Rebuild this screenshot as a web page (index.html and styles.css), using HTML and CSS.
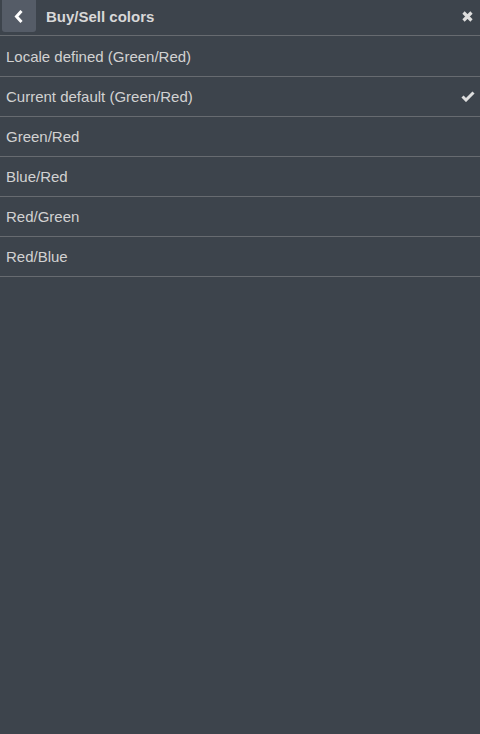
FILE: index.html
```html
<!DOCTYPE html>
<html lang="en">
<head>
    <meta charset="UTF-8">
    <meta name="viewport" content="width=device-width, initial-scale=1.0">
    <title>Buy/Sell colors</title>
    <link rel="stylesheet" href="styles.css">
</head>
<body>
    <div class="panel">
        <div class="header">
            <button class="back">
                <svg width="10" height="13" viewBox="0 0 10 13"><path d="M7.5 1 L2.5 6.5 L7.5 12" fill="none" stroke="#fff" stroke-width="3"/></svg>
            </button>
            <span class="title">Buy/Sell colors</span>
            <span class="close">
                <svg width="11" height="11" viewBox="0 0 11 11"><path d="M1.5 1.5 L9.5 9.5 M9.5 1.5 L1.5 9.5" stroke="#ddd" stroke-width="3.2"/></svg>
            </span>
        </div>
        <ul class="options">
            <li>Locale defined (Green/Red)</li>
            <li class="selected">Current default (Green/Red)
                <svg class="check" width="14" height="11" viewBox="0 0 14 11"><path d="M1.5 5.5 L5 9 L12.5 1.5" fill="none" stroke="#ddd" stroke-width="3"/></svg>
            </li>
            <li>Green/Red</li>
            <li>Blue/Red</li>
            <li>Red/Green</li>
            <li>Red/Blue</li>
        </ul>
    </div>
</body>
</html>
```

FILE: styles.css
```css
body {
    margin: 0;
    background-color: #3d444c;
    font-family: Arial, "Liberation Sans", sans-serif;
    color: #d2d2d2;
    height: 100vh;
}
.header {
    display: flex;
    align-items: flex-start;
    height: 35px;
    border-bottom: 1px solid #676b70;
}
.back {
    width: 34px;
    height: 32px;
    margin-left: 2px;
    padding: 0;
    border: none;
    border-radius: 0 0 3px 3px;
    background-color: #555c67;
    display: flex;
    align-items: center;
    justify-content: center;
    cursor: pointer;
}
.title {
    font-size: 15px;
    font-weight: bold;
    color: #d8d8d8;
    margin-left: 10px;
    line-height: 33px;
    flex: 1;
}
.close {
    padding: 11px 7px 0 0;
    line-height: 0;
}
.options {
    list-style: none;
    margin: 1px 0 0;
    padding: 0;
}
.options li {
    height: 38px;
    padding: 0 5px 1px 6px;
    border-bottom: 1px solid #676b70;
    font-size: 15px;
    display: flex;
    align-items: center;
    justify-content: space-between;
}
```
